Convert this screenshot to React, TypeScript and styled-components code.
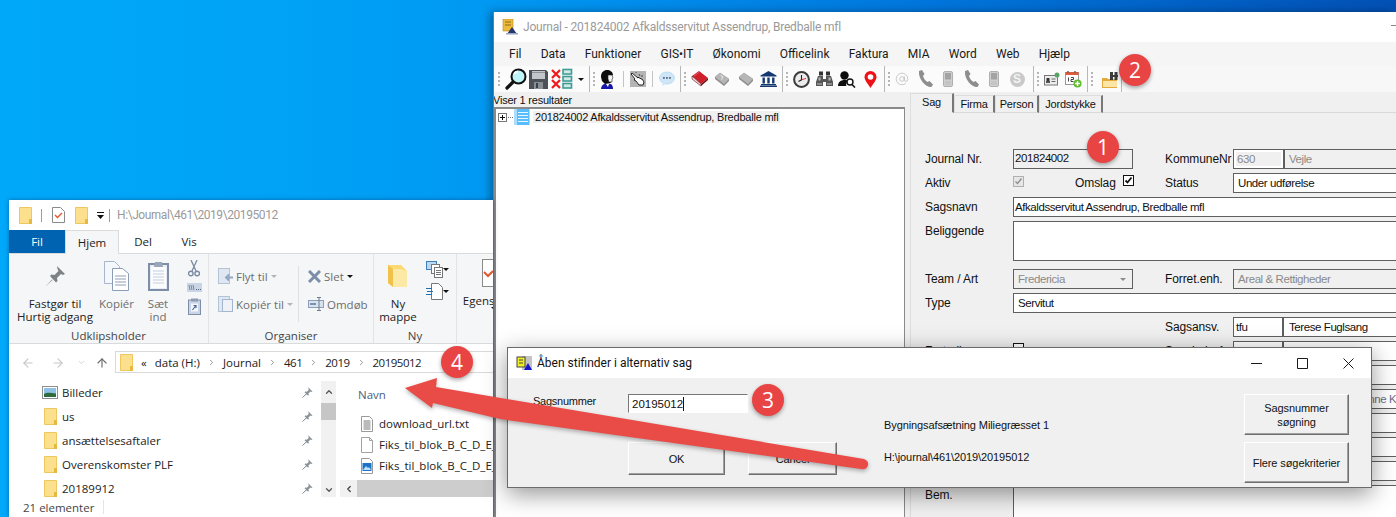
import React from 'react'
import styled, { createGlobalStyle } from 'styled-components'
import { ArrowLeft, ArrowRight, ArrowUp, ChevronDown, ChevronLeft, ChevronRight, ChevronUp, AtSign } from 'lucide-react'

const GlobalStyle = createGlobalStyle`
   html, body { margin: 0; padding: 0; background: #00a2f6; }
   * { box-sizing: border-box; }
`

const segoe = `"Open Sans", "Noto Sans", sans-serif`
const caption = `Roboto, "Open Sans", sans-serif`
const winforms = `"Liberation Sans", Arial, sans-serif`

const Desktop = styled.div`
   position: relative;
   width: 1396px;
   height: 517px;
   overflow: hidden;
   background: linear-gradient(90deg, #00a8fa 0, #00a2f6 300px, #0098f2 490px, #0078de 900px, #0350b4 1396px);
`

/* ---------- icons ---------- */
const Svg = styled.svg`
   display: block;
   flex: none;
`

const Magnifier = () => (
   <Svg width="22" height="22" viewBox="0 0 22 22">
      <circle cx="13.5" cy="8.5" r="7" fill="#bff4f8" stroke="#111" strokeWidth="2" />
      <path d="M9 6a5 5 0 0 1 4-2.5" stroke="#fff" strokeWidth="2" fill="none" />
      <path d="M2 20l6-6" stroke="#111" strokeWidth="3.2" strokeLinecap="round" />
   </Svg>
)
const Floppy = () => (
   <Svg width="21" height="21" viewBox="0 0 21 21">
      <path d="M1 1h17l2 2v17H1z" fill="#4c5257" />
      <rect x="4" y="2" width="13" height="8" fill="#c3c7ca" />
      <rect x="4" y="3" width="13" height="1" fill="#8f9498" />
      <rect x="6" y="13" width="9" height="7" fill="#8a8f93" />
      <rect x="8" y="14" width="2" height="5" fill="#3b4044" />
   </Svg>
)
const XList = () => (
   <Svg width="22" height="22" viewBox="0 0 22 22">
      <path d="M1 2l8 8M9 2l-8 8M1 12l8 8M9 12l-8 8" stroke="#f0181c" strokeWidth="2.2" />
      <g fill="#cfe9e6" stroke="#3f9c95" strokeWidth="1.6">
         <rect x="12" y="1.5" width="8.5" height="4.5" />
         <rect x="12" y="8.5" width="8.5" height="4.5" />
         <rect x="12" y="15.5" width="8.5" height="4.5" />
      </g>
   </Svg>
)
const Caret = styled.i<{ $size?: number; $color?: string }>`
   display: block;
   flex: none;
   width: 0;
   height: 0;
   border-left: ${p => p.$size ?? 3}px solid transparent;
   border-right: ${p => p.$size ?? 3}px solid transparent;
   border-top: ${p => p.$size ?? 3}px solid ${p => p.$color ?? '#111'};
`
const Person = () => (
   <Svg width="16" height="20" viewBox="0 0 16 20">
      <path d="M2 8c0-5 3-7 6-7s6 2 6 5l-2 1-1 5 1 2-6 1-3-3z" fill="#0d0d0d" />
      <path d="M9 6l4 0 1 3-1 1 0 3-3 0-1-3z" fill="#f3f3f3" stroke="#222" strokeWidth=".6" />
      <path d="M2 20c0-3 2-5 4-5l5 0c2 0 3 2 3 5z" fill="#1616a8" />
      <path d="M7 15l3 0-1 3z" fill="#fff" />
   </Svg>
)
const HandPointer = () => (
   <Svg width="16" height="16" viewBox="0 0 16 16">
      <rect width="16" height="16" fill="#b4b4b4" />
      <path d="M2 2l6 5 0-1 1 1 1 0 1 1 1 0 2 3-1 3-4 0-3-4-2-1 1-1-4-5z" fill="#fff" stroke="#111" strokeWidth=".9" />
      <path d="M9 3l1 2M12 4l0 2M6 1l0 1" stroke="#333" strokeWidth=".8" />
   </Svg>
)
const Chat = () => (
   <Svg width="16" height="16" viewBox="0 0 16 16">
      <ellipse cx="8" cy="7" rx="7.5" ry="6" fill="#cfe6f7" stroke="#a9d2ee" strokeWidth=".7" />
      <path d="M4 11l-1 4 4-2z" fill="#cfe6f7" />
      <g fill="#5b6d88"><rect x="4" y="6" width="1.8" height="1.8" /><rect x="7" y="6" width="1.8" height="1.8" /><rect x="10" y="6" width="1.8" height="1.8" /></g>
   </Svg>
)
const Book = () => (
   <Svg width="18" height="16" viewBox="0 0 18 16">
      <path d="M1 5l7-5 9 7-7 6z" fill="#cf1f2b" />
      <path d="M1 5l0 3 9 7 0-2z" fill="#f2d8d8" stroke="#561015" strokeWidth=".6" />
      <path d="M10 13l0 2 7-6 0-2z" fill="#6f1016" />
      <path d="M3 5l5-3.5" stroke="#e96a70" strokeWidth=".8" />
   </Svg>
)
const TagGrey = ({ first }: { first?: boolean }) => (
   <Svg width="16" height="14" viewBox="0 0 16 14">
      <path d="M1 5l5-4 9 6-5 5z" fill="#b6b6b6" stroke="#9c9c9c" strokeWidth=".6" />
      <path d="M1 5l0 2 9 7 0-2z M10 12l0 2 5-5 0-2z" fill="#8f8f8f" />
      {first && <path d="M6.5 3.5l2.5 1-1.5 3.2" stroke="#e8e8e8" strokeWidth="1" fill="none" />}
   </Svg>
)
const Bank = () => (
   <Svg width="17" height="16" viewBox="0 0 17 16" fill="#14386f">
      <path d="M8.5 0L16.5 4.5V5.5H.5V4.5z" />
      <rect x="2.5" y="6.5" width="2.4" height="6" />
      <rect x="7.3" y="6.5" width="2.4" height="6" />
      <rect x="12.1" y="6.5" width="2.4" height="6" />
      <rect x="1" y="13" width="15" height="1.4" />
      <rect y="14.6" width="17" height="1.4" />
   </Svg>
)
const Clock = () => (
   <Svg width="17" height="17" viewBox="0 0 17 17">
      <circle cx="8.5" cy="8.5" r="7.4" fill="#ececec" stroke="#3b3b3b" strokeWidth="2" />
      <path d="M8.5 4v4.8l-3 1.6" stroke="#222" strokeWidth="1.1" fill="none" />
      <path d="M8.5 8.8l4.5-1.4" stroke="#d63a3a" strokeWidth="1" />
   </Svg>
)
const Binoculars = () => (
   <Svg width="17" height="16" viewBox="0 0 17 16">
      <rect x="3" y="0.5" width="4" height="4" fill="#333" />
      <rect x="10" y="0.5" width="4" height="4" fill="#333" />
      <path d="M2 5h5v3h3V5h5l2 6v4h-7v-4H7v4H0v-4z" fill="#565656" />
      <path d="M2.5 6.5h2v3h-2zM12.5 6.5h2v3h-2z" fill="#b9b9b9" />
      <rect x="1" y="12" width="5" height="2" fill="#8c8c8c" />
      <rect x="11" y="12" width="5" height="2" fill="#8c8c8c" />
   </Svg>
)
const PersonSearch = () => (
   <Svg width="18" height="17" viewBox="0 0 18 17">
      <circle cx="6.5" cy="4.5" r="4.2" fill="#0e0e0e" />
      <path d="M0 15c0-4 3-6 6.5-6 2 0 3 .5 3 .5L8 14l.5 1z" fill="#0e0e0e" />
      <circle cx="12" cy="11" r="3" fill="#fff" stroke="#111" strokeWidth="1.4" />
      <path d="M14 13.5l3 3" stroke="#111" strokeWidth="1.6" />
   </Svg>
)
const MapPin = () => (
   <Svg width="13" height="17" viewBox="0 0 13 17">
      <path d="M6.5 17C4 12.5 .5 9.5.5 6a6 6 0 0 1 12 0c0 3.5-3.5 6.5-6 11z" fill="#ef0f17" />
      <circle cx="6.5" cy="6" r="2.8" fill="#fff" />
   </Svg>
)
const PhoneGrey = () => (
   <Svg width="17" height="18" viewBox="0 0 17 18">
      <path d="M2 1L5 0l2.5 4-1.500 2c.5 2 2 4.500 4.500 6l2-1 3.500 3.500-1.500 2.500C10 18 1 10 2 1z" fill="#8e8e8e" />
   </Svg>
)
const MobileGrey = () => (
   <Svg width="10" height="16" viewBox="0 0 10 16">
      <rect x=".5" y=".5" width="9" height="15" rx="1.5" fill="#cfcfcf" stroke="#b0b0b0" />
      <rect x="2" y="2" width="6" height="6.5" fill="#a3a3a3" />
      <path d="M2.5 11h5M2.5 13h5" stroke="#a3a3a3" strokeDasharray="1 1" />
   </Svg>
)
const SkypeBadge = styled.span`
   display: flex;
   align-items: center;
   justify-content: center;
   width: 15px;
   height: 15px;
   border-radius: 50%;
   background: #c9c9c9;
   color: #f2f2f2;
   font: bold 12px ${winforms};
`
const ContactCard = () => (
   <Svg width="16" height="14" viewBox="0 0 16 14">
      <rect x=".5" y="3.5" width="13" height="9.5" fill="#ededed" stroke="#777" />
      <rect x="2.5" y="6" width="3" height="3" fill="#333" />
      <rect x="2" y="9" width="4" height="2" fill="#555" />
      <path d="M7.5 7h4M7.5 9.5h4" stroke="#666" />
      <circle cx="13" cy="3" r="2.5" fill="#5aa469" />
   </Svg>
)
const CalendarPlus = () => (
   <Svg width="17" height="17" viewBox="0 0 17 17">
      <rect x=".5" y="1.5" width="13" height="12" fill="#fff" stroke="#999" />
      <rect x=".5" y="1" width="13" height="3" fill="#e05b3a" />
      <path d="M3 0v2M10 0v2" stroke="#666" strokeWidth="1.5" />
      <path d="M3.500 6.500v4M6 6.500h2.500v2H6v2h2.500" stroke="#333" fill="none" strokeWidth=".9" />
      <circle cx="12.5" cy="12.5" r="4" fill="#5ebc2e" />
      <path d="M12.500 10v5M10 12.500h5" stroke="#fff" strokeWidth="1.4" />
   </Svg>
)
const FolderBinoculars = () => (
   <Svg width="17" height="17" viewBox="0 0 17 17">
      <path d="M0 7h5l1 1h9v9H0z" fill="#e3a93c" />
      <path d="M1 10h14v6H1z" fill="#fbe6a6" />
      <rect x="8" y="1" width="3" height="8" fill="#3c3c3c" />
      <rect x="12.5" y="1" width="3" height="8" fill="#3c3c3c" />
      <rect x="8" y="4" width="8" height="2" fill="#3c3c3c" />
   </Svg>
)
const JournalIcon = () => (
   <Svg width="16" height="16" viewBox="0 0 16 16">
      <rect x="1" y="0" width="10" height="12" fill="#efbb3c" stroke="#b98a20" strokeWidth=".6" />
      <path d="M3 3h6M3 6h6" stroke="#8b6a18" />
      <path d="M10 8l5 7H5z" fill="#27376f" />
      <rect x="4" y="14" width="12" height="1.5" fill="#9aa3c0" />
   </Svg>
)
const DialogIcon = () => (
   <Svg width="17" height="17" viewBox="0 0 17 17">
      <rect x="6" y="1" width="10" height="14" fill="#c4c4c4" />
      <rect x="1" y="2" width="8" height="10" fill="#f2ee1f" stroke="#444" />
      <path d="M3 5h4M3 8h4" stroke="#444" />
      <path d="M12 8l4 7H8z" fill="#1414cc" />
   </Svg>
)
const TreePlus = () => (
   <Svg width="9" height="9" viewBox="0 0 9 9">
      <rect x=".5" y=".5" width="8" height="8" fill="#fff" stroke="#777" />
      <path d="M2 4.5h5M4.5 2v5" stroke="#111" />
   </Svg>
)
const TreeList = () => (
   <Svg width="16" height="16" viewBox="0 0 16 16">
      <rect x=".5" width="1" height="16" fill="#58bdfd" />
      <rect x="2.5" width="13" height="16" fill="#58bdfd" />
      <path d="M4 3.500h10M4 6.500h10M4 9.500h10M4 12.500h10" stroke="#e8f6ff" />
   </Svg>
)
const Folder = ({ w = 13, h = 17 }: { w?: number; h?: number }) => (
   <Svg width={w} height={h} viewBox="0 0 13 17">
      <path d="M.5.5h12v16H.5z" fill="#fde08e" stroke="#eec75f" />
      <rect x="10" y="12" width="3" height="5" fill="#e9b83f" />
   </Svg>
)
const QuickCheck = () => (
   <Svg width="13" height="16" viewBox="0 0 13 16">
      <path d="M.5.5h8l4 4v11H.5z" fill="#fff" stroke="#8a8a8a" />
      <path d="M3 8l2.500 2.500L10 6" stroke="#e2572b" strokeWidth="1.4" fill="none" />
   </Svg>
)
const DropLine = () => (
   <Svg width="7" height="7" viewBox="0 0 7 7">
      <rect width="7" height="1" fill="#111" />
      <path d="M0 3h7L3.500 7z" fill="#111" />
   </Svg>
)
const RibbonPin = () => (
   <Svg width="22" height="22" viewBox="0 0 22 22" fill="#7d8287">
      <path d="M13 1l8 8-2 1-2-1-4 4 .5 3-1.500 1.500L6 11l1.500-1.500 3 .5 4-4-1-2z" />
      <path d="M8 14.500l-6.500 7 7-6.500z" />
   </Svg>
)
const CopyIcon = () => (
   <Svg width="25" height="30" viewBox="0 0 25 30">
      <path d="M.5.5h10l5 5v17H.5z" fill="#f4f7fb" stroke="#a7b6cb" />
      <path d="M8.5 7.5h10l6 5v17h-16z" fill="#fff" stroke="#8c9db6" />
      <path d="M11 15h11M11 18h11M11 21h11M11 24h11" stroke="#8c9db6" />
   </Svg>
)
const PasteIcon = () => (
   <Svg width="21" height="30" viewBox="0 0 21 30">
      <rect x="1" y="3" width="19" height="26" fill="#e9edf3" stroke="#7f8ea8" strokeWidth="2" />
      <rect x="3" y="6" width="15" height="21" fill="#fbfcfe" />
      <path d="M5 10h11M5 13h11M5 16h11M5 19h11M5 22h11" stroke="#c3cfde" />
      <path d="M7 1h7l1 5H6z" fill="#9aa6b8" />
   </Svg>
)
const ScissorsIcon = () => (
   <Svg width="12" height="17" viewBox="0 0 12 17" fill="none" stroke="#7b8ba3">
      <path d="M3 0l5 11M9 0L4 11" strokeWidth="1.3" />
      <circle cx="2.8" cy="13.5" r="2.3" strokeWidth="1.4" />
      <circle cx="9.2" cy="13.5" r="2.3" strokeWidth="1.4" />
   </Svg>
)
const PathIcon = () => (
   <Svg width="15" height="9" viewBox="0 0 15 9">
      <rect width="15" height="9" fill="#c9d4e4" />
      <path d="M2 2l1 5M4 2l1 5M6 2l1 5" stroke="#5b6a82" strokeWidth=".7" />
      <path d="M9 6.500h1M11 6.500h1M13 6.500h1" stroke="#5b6a82" />
   </Svg>
)
const ShortcutIcon = () => (
   <Svg width="13" height="17" viewBox="0 0 13 17">
      <rect x=".5" y="2" width="12" height="14.5" fill="#c9d5e6" stroke="#7f8ea8" />
      <rect x="3" y=".5" width="7" height="3" fill="#8f9db3" />
      <rect x="3" y="5.5" width="7" height="8" fill="#f4f6fa" />
      <path d="M4.500 12l3-4M5.500 7.500h2.500V10" stroke="#4a6a96" fill="none" strokeWidth="1.2" />
   </Svg>
)
const MoveIcon = ({ copy }: { copy?: boolean }) => (
   <Svg width="15" height="16" viewBox="0 0 15 16">
      <rect x=".5" y=".5" width="11" height="15" fill="#dfe7f2" stroke="#b4c3d8" />
      {copy
         ? <rect x="4.5" y="3.5" width="10" height="12" fill="#eef2f8" stroke="#a4b5cd" />
         : <path d="M15 9.500H9M11 6.500l-3 3 3 3" stroke="#93a6c2" strokeWidth="1.8" fill="none" />}
   </Svg>
)
const RenameIcon = () => (
   <Svg width="16" height="14" viewBox="0 0 16 14">
      <rect x=".5" y="3.5" width="15" height="7" fill="#d8e2ef" stroke="#8ba0bd" />
      <rect x="2" y="6" width="6" height="2" fill="#7c91ad" />
      <path d="M11 .5v13M9 .5h4M9 13.500h4" stroke="#6f7a8b" />
   </Svg>
)
const DeleteX = () => (
   <Svg width="13" height="13" viewBox="0 0 13 13">
      <path d="M1 1l11 11M12 1L1 12" stroke="#7c8ea8" strokeWidth="3" />
   </Svg>
)
const NewFolderLarge = () => (
   <Svg width="20" height="24" viewBox="0 0 20 24">
      <path d="M0 1h13l6 6v16H5l-5-4z" fill="#fcd973" />
      <path d="M0 1l5 4 0 18-5-4z" fill="#f2c14c" />
      <path d="M5 5h8l6 2v16H5z" fill="#fde9a6" />
   </Svg>
)
const NewItem = () => (
   <Svg width="17" height="17" viewBox="0 0 17 17">
      <rect x=".5" y=".5" width="10" height="8" fill="#bcd7ef" stroke="#3f7fb8" />
      <rect x="5.5" y="3.5" width="8" height="9" fill="#fff" stroke="#777" />
      <rect x="8.5" y="6.5" width="8" height="10" fill="#fff" stroke="#777" />
      <path d="M10 9.500h5M10 11.500h5M10 13.500h5" stroke="#777" />
   </Svg>
)
const EasyAccess = () => (
   <Svg width="17" height="17" viewBox="0 0 17 17">
      <path d="M5.500.5h7l4 4v12h-11z" fill="#fff" stroke="#777" />
      <path d="M0 5.500h6M1 8.500h6M0 11.500h6" stroke="#1f6fb5" strokeWidth="1.2" />
   </Svg>
)
const Properties = () => (
   <Svg width="13" height="28" viewBox="0 0 13 28">
      <rect x=".5" y=".5" width="12" height="27" fill="#fff" stroke="#8a8a8a" />
      <path d="M2 13l4 4 5-5" stroke="#e2572b" strokeWidth="2" fill="none" />
   </Svg>
)
const NavPin = () => (
   <Svg width="11" height="11" viewBox="0 0 11 11" fill="#8d9499">
      <path d="M6.500.5l4 4-1 .5-1-.5-2 2 .3 1.500-.8.8-3.500-3.500.8-.8 1.500.3 2-2-.5-1z" />
      <path d="M4 7L.5 10.500 1 10l3.500-3z" stroke="#8d9499" strokeWidth=".8" />
   </Svg>
)
const PictureIcon = () => (
   <Svg width="16" height="13" viewBox="0 0 16 13">
      <rect x=".5" y=".5" width="15" height="12" fill="#fff" stroke="#8f8f8f" />
      <rect x="2" y="2" width="12" height="9" fill="#8fc0e6" />
      <path d="M2 8c3-2 7-1 12-.5V11H2z" fill="#2e6b3e" />
   </Svg>
)
const TextFile = () => (
   <Svg width="12" height="16" viewBox="0 0 12 16">
      <path d="M.5.5h8l3 3v12H.5z" fill="#fff" stroke="#9a9a9a" />
      <path d="M2.500 5h7M2.500 7h7M2.500 9h7M2.500 11h7M2.500 13h7" stroke="#777" />
   </Svg>
)
const BlankFile = () => (
   <Svg width="12" height="16" viewBox="0 0 12 16">
      <path d="M.5.5h8l3 3v12H.5z" fill="#fff" stroke="#a2a2a2" />
      <path d="M8.500.5v3h3" fill="none" stroke="#a2a2a2" />
   </Svg>
)
const ImageFile = () => (
   <Svg width="12" height="16" viewBox="0 0 12 16">
      <path d="M.5.5h8l3 3v12H.5z" fill="#fff" stroke="#9a9a9a" />
      <rect x="1.5" y="5" width="9" height="8" fill="#1a73c9" />
      <path d="M2 12l3-4 2 2 1-1 2 3z" fill="#bfe0fa" />
   </Svg>
)
const WinGlyph = ({ d, color = '#1a1a1a' }: { d: string; color?: string }) => (
   <Svg width="11" height="11" viewBox="0 0 11 11">
      <path d={d} fill="none" stroke={color} />
   </Svg>
)

/* ---------- journal window ---------- */
const JournalWindow = styled.div`
   position: absolute;
   left: 493px;
   top: 12px;
   right: 0;
   bottom: 0;
   display: flex;
   flex-direction: column;
   overflow: hidden;
   background: #f0f0f0;
   border-left: 1px solid #7a7a7a;
   box-shadow: -3px 0 8px rgba(0, 0, 0, .35);
`
const TitleBar = styled.div`
   display: flex;
   flex: none;
   align-items: center;
   gap: 5px;
   height: 30px;
   padding-left: 8px;
   background: #fff;
   color: #9a9a9a;
   font: 12px ${caption};
   letter-spacing: -.2px;
`
const TitleText = styled.span`
   flex: 1;
`
const ClippedMinimize = styled.span`
   margin-right: -6px;
`
const MenuBar = styled.div`
   display: flex;
   flex: none;
   align-items: center;
   gap: 19.2px;
   height: 24px;
   padding-left: 15px;
   background: #f5f5f5;
   color: #1a1a1a;
   font: 12px ${caption};
`
const ToolBar = styled.div`
   display: flex;
   flex: none;
   height: 26px;
   padding-left: 1px;
   background: #f7f7f7;
`
const ToolGroup = styled.div<{ $w: number }>`
   display: flex;
   flex: none;
   align-items: center;
   width: ${p => p.$w}px;
   height: 26px;
   background: #fbfbfb;
   border-right: 1px solid #b8b8b8;
   border-radius: 3px 0 0 3px;
`
const Grip = styled.i`
   flex: none;
   width: 2px;
   height: 14px;
   margin: 0 5px 0 3px;
   background: repeating-linear-gradient(#b5b5b5 0 2px, transparent 2px 4px);
`
const Tool = styled.span<{ $w?: number }>`
   display: flex;
   flex: none;
   align-items: center;
   justify-content: center;
   width: ${p => p.$w ?? 23}px;
`
const ToolSep = styled.i`
   flex: none;
   width: 1px;
   height: 16px;
   background: #c4c4c4;
`
const Main = styled.div`
   display: flex;
   flex: 1;
   min-height: 0;
`
const TreeSide = styled.div`
   display: flex;
   flex: none;
   flex-direction: column;
   width: 411px;
   color: #111;
   font: 11px ${winforms};
   letter-spacing: -.22px;
`
const ResultCount = styled.div`
   height: 15px;
   margin-left: -1px;
   line-height: 17px;
`
const TreeBox = styled.div`
   flex: 1;
   padding: 0 2px;
   background: #fff;
   border: 1px solid #8a8a8a;
   border-width: 2px 1px 0 2px;
`
const TreeRow = styled.div`
   display: flex;
   align-items: center;
   height: 16px;
`
const TreeDots = styled.i`
   width: 5px;
   margin: 0 1px;
   border-top: 1px dotted #777;
`
const TreeLabel = styled.span`
   margin-left: 3px;
   padding: 0 2px;
   background: #f0f0f0;
   white-space: nowrap;
`
const DetailSide = styled.div`
   display: flex;
   flex: 1;
   flex-direction: column;
   min-width: 0;
   padding: 1px 0 0 5px;
`
const TabStrip = styled.div`
   display: flex;
   flex: none;
   align-items: flex-end;
   height: 20px;
   border-bottom: 1px solid #d9d9d9;
   font: 11px ${winforms};
   letter-spacing: -.2px;
   color: #111;
`
const WinTab = styled.div<{ $w: number; $active?: boolean }>`
   display: flex;
   align-items: center;
   justify-content: center;
   width: ${p => p.$w}px;
   height: ${p => (p.$active ? 20 : 18)}px;
   margin-bottom: -1px;
   padding: 0 0 ${p => (p.$active ? 3 : 0)}px;
   background: #f0f0f0;
   border-top: 1px solid #ddd;
   border-left: 1px solid #ddd;
   border-right: 2px solid #777;
   border-bottom: 1px solid ${p => (p.$active ? '#f0f0f0' : '#d9d9d9')};
`
const FormPanel = styled.div`
   display: flex;
   flex: 1;
   flex-direction: column;
   gap: 4px;
   margin-right: -8px;
   padding: 36px 0 0 14px;
   border-left: 1px solid #ddd;
   font: 12px ${winforms};
   color: #111;
`
const FormRow = styled.div<{ $h?: number; $top?: number }>`
   display: flex;
   flex: none;
   height: ${p => p.$h ?? 20}px;
   margin-top: ${p => p.$top ?? 0}px;
`
const FormLabel = styled.span<{ $w: number }>`
   flex: none;
   width: ${p => p.$w}px;
   padding-top: 3px;
   white-space: nowrap;
   letter-spacing: -.1px;
`
const Field = styled.div<{ $w?: number; $muted?: boolean; $framed?: boolean; $pad?: number }>`
   display: flex;
   flex: ${p => (p.$w ? 'none' : '1')};
   align-items: center;
   justify-content: space-between;
   width: ${p => (p.$w ? `${p.$w}px` : 'auto')};
   padding: 0 6px 0 ${p => p.$pad ?? 3}px;
   background: ${p => (p.$muted ? '#f0f0f0' : '#fff')};
   border: 1px solid #5f5f5f;
   box-shadow: ${p => (p.$framed ? 'inset 0 0 0 2px #fff' : 'none')};
   color: ${p => (p.$muted ? '#8a8a8a' : '#111')};
   font-size: 11.5px;
   letter-spacing: -.42px;
   white-space: nowrap;
   overflow: hidden;
`
const FieldValue = styled.span`
   margin-top: -3px;
   color: #111;
`
const GreyValue = styled.span`
   color: #6f6f8a;
`
const Check = styled.span<{ $muted?: boolean }>`
   display: flex;
   flex: none;
   align-items: center;
   justify-content: center;
   width: 11px;
   height: 11px;
   margin-top: ${p => (p.$muted ? 3 : 2)}px;
   background: ${p => (p.$muted ? '#e6e6e6' : '#fff')};
   border: 1px solid ${p => (p.$muted ? '#b0b0b0' : '#111')};
`
const Spacer = styled.i<{ $w: number }>`
   flex: none;
   width: ${p => p.$w}px;
`

/* ---------- explorer window ---------- */
const ExplorerWindow = styled.div`
   position: absolute;
   left: 9px;
   top: 200px;
   width: 484px;
   bottom: 0;
   display: flex;
   flex-direction: column;
   overflow: hidden;
   background: #fff;
   font: 11.5px ${segoe};
   color: #222;
   box-shadow: 0 0 4px rgba(0, 40, 90, .5);
`
const QuickBar = styled.div`
   display: flex;
   flex: none;
   align-items: center;
   height: 30px;
   padding-left: 10px;
   color: #9a9a9a;
   font: 12px ${caption};
   letter-spacing: -.42px;
`
const QuickSep = styled.i<{ $l: number; $r: number }>`
   flex: none;
   width: 1px;
   height: 13px;
   margin: 0 ${p => p.$r}px 0 ${p => p.$l}px;
   background: #9a9a9a;
`
const RibbonTabs = styled.div`
   display: flex;
   flex: none;
   align-items: stretch;
   height: 24px;
   border-bottom: 1px solid #dadbdc;
`
const RibbonTab = styled.div<{ $w: number; $kind?: 'file' | 'active' }>`
   display: flex;
   align-items: center;
   justify-content: center;
   width: ${p => p.$w}px;
   margin-bottom: ${p => (p.$kind === 'active' ? -1 : 0)}px;
   background: ${p => (p.$kind === 'file' ? '#0063b1' : p.$kind === 'active' ? '#f5f6f7' : 'transparent')};
   color: ${p => (p.$kind === 'file' ? '#fff' : '#222')};
   border: ${p => (p.$kind === 'active' ? '1px solid #dadbdc' : 'none')};
   border-bottom: none;
`
const Ribbon = styled.div`
   display: flex;
   flex: none;
   height: 90px;
   background: #f5f6f7;
   border-bottom: 1px solid #dadbdc;
`
const RibbonGroup = styled.div<{ $w: number }>`
   display: flex;
   flex: none;
   flex-direction: column;
   width: ${p => p.$w}px;
   padding-top: 3px;
   border-right: 1px solid #e2e3e4;
`
const GroupBody = styled.div`
   display: flex;
   flex: 1;
   min-height: 0;
`
const GroupLabel = styled.div`
   flex: none;
   height: 17px;
   line-height: 19px;
   text-align: center;
   color: #444;
`
const BigButton = styled.div<{ $w: number; $muted?: boolean }>`
   display: flex;
   flex: none;
   flex-direction: column;
   align-items: center;
   width: ${p => p.$w}px;
   color: ${p => (p.$muted ? '#6e6e6e' : '#222')};
   line-height: 13px;
   text-align: center;
   white-space: nowrap;
`
const BigIcon = styled.div<{ $shift?: number }>`
   display: flex;
   align-items: center;
   justify-content: center;
   height: 38px;
   margin: 0 ${p => p.$shift ?? 0}px 2px 0;
`
const SmallColumn = styled.div<{ $gap: number; $pad: number; $w: number }>`
   display: flex;
   flex: none;
   flex-direction: column;
   align-items: center;
   gap: ${p => p.$gap}px;
   width: ${p => p.$w}px;
   padding-top: ${p => p.$pad}px;
`
const InlineColumn = styled.div<{ $w: number }>`
   display: flex;
   flex: none;
   flex-direction: column;
   gap: 12px;
   width: ${p => p.$w}px;
   padding: 11px 0 0 9px;
`
const InlineAction = styled.div`
   display: flex;
   align-items: center;
   gap: 3px;
   height: 16px;
   color: #6e6e6e;
   white-space: nowrap;
`
const GroupSep = styled.i`
   flex: none;
   width: 1px;
   height: 56px;
   margin-top: 9px;
   background: #dfe0e1;
`
const AddressRow = styled.div`
   display: flex;
   flex: none;
   align-items: center;
   height: 37px;
   padding-left: 12px;
`
const NavButton = styled.span<{ $w: number; $color?: string }>`
   display: flex;
   flex: none;
   justify-content: center;
   width: ${p => p.$w}px;
   color: ${p => p.$color ?? '#c8c8c8'};
`
const AddressBox = styled.div`
   display: flex;
   flex: 1;
   align-items: center;
   gap: 7px;
   height: 22px;
   margin-left: 6px;
   margin-top: -1px;
   padding-left: 4px;
   background: #fff;
   border: 1px solid #d9d9d9;
   border-right: none;
   color: #222;
   white-space: nowrap;
`
const Crumb = styled.span<{ $ml?: number; $tight?: boolean }>`
   margin-left: ${p => p.$ml ?? 0}px;
   letter-spacing: ${p => (p.$tight ? '-.5px' : 'normal')};
`
const ExplorerBody = styled.div`
   display: flex;
   flex: 1;
   min-height: 0;
`
const NavPane = styled.div`
   flex: none;
   display: flex;
   flex-direction: column;
   width: 312px;
   overflow: hidden;
`
const NavItem = styled.div`
   display: flex;
   flex: none;
   align-items: center;
   height: 24px;
   padding: 0 0 1px 33px;
`
const NavIconSlot = styled.span`
   display: flex;
   flex: none;
   justify-content: center;
   width: 16px;
   margin-right: 4px;
`
const NavText = styled.span`
   flex: 1;
   white-space: nowrap;
`
const NavPinSlot = styled.span`
   flex: none;
   width: 19px;
`
const NavScroll = styled.div`
   flex: none;
   display: flex;
   flex-direction: column;
   align-items: center;
   width: 15px;
   background: #f1f1f1;
   color: #555;
`
const ScrollEnd = styled.span<{ $grow?: boolean }>`
   flex: ${p => (p.$grow ? '1' : 'none')};
   display: flex;
   justify-content: center;
   align-items: ${p => (p.$grow ? 'flex-end' : 'flex-start')};
   padding: ${p => (p.$grow ? '0 0 2px' : '6px 0 0')};
`
const NavThumb = styled.i`
   flex: none;
   width: 15px;
   height: 17px;
   margin-top: 6px;
   background: #c6c6c6;
`
const FilePane = styled.div`
   flex: 1;
   display: flex;
   flex-direction: column;
   min-width: 0;
   margin-left: 4px;
   overflow: hidden;
`
const FileList = styled.div`
   flex: 1;
   min-height: 0;
   overflow: hidden;
`
const FileHead = styled.div`
   height: 32px;
   padding: 6px 0 0 18px;
   color: #4c607a;
`
const FileRow = styled.div`
   display: flex;
   align-items: center;
   gap: 6px;
   height: 21px;
   padding-left: 21px;
   white-space: nowrap;
   overflow: hidden;
`
const GroupLink = styled.div`
   height: 14px;
   padding-left: 18px;
   color: #0033cc;
`
const HScroll = styled.div`
   display: flex;
   flex: none;
   height: 17px;
   background: #f1f1f1;
   color: #444;
`
const HScrollEnd = styled.span`
   flex: none;
   display: flex;
   align-items: center;
   justify-content: center;
   width: 17px;
`
const HThumb = styled.i`
   flex: 1;
   background: #cdcdcd;
`
const StatusBar = styled.div`
   display: flex;
   flex: none;
   align-items: center;
   height: 20px;
   padding-left: 14px;
   color: #444;
`
const StatusSep = styled.i`
   width: 1px;
   height: 14px;
   margin-left: 9px;
   background: #e4e4e4;
`

/* ---------- dialog ---------- */
const Dialog = styled.div`
   position: absolute;
   left: 507px;
   top: 347px;
   width: 865px;
   height: 141px;
   display: flex;
   flex-direction: column;
   background: #f0f0f0;
   border: 1px solid #6b6b6b;
   box-shadow: 0 6px 22px rgba(0, 0, 0, .42);
   font: 11px ${winforms};
   letter-spacing: -.1px;
   color: #111;
`
const DialogTitle = styled.div`
   display: flex;
   flex: none;
   align-items: center;
   height: 30px;
   padding-left: 8px;
   background: #fff;
   font: 12px ${caption};
   letter-spacing: 0;
   color: #111;
`
const DialogName = styled.span`
   flex: 1;
   margin-left: 4px;
`
const WinControls = styled.div`
   display: flex;
   align-items: center;
   gap: 35px;
   padding-right: 17px;
`
const DialogBody = styled.div`
   display: flex;
   flex: 1;
   padding: 16px 22px 0 25px;
`
const SearchGrid = styled.div`
   display: grid;
   flex: none;
   grid-template-columns: 95px 97px 23px 89px;
   grid-template-rows: 19px 33px;
   row-gap: 29px;
`
const SearchLabel = styled.span`
   padding-top: 1px;
   letter-spacing: -.25px;
`
const SearchInput = styled.div`
   grid-column: 2 / 4;
   display: flex;
   align-items: center;
   padding-left: 3px;
   background: #fff;
   border: 1px solid;
   border-color: #777 #fff #fff #777;
   font-size: 11.5px;
   letter-spacing: 0;
`
const Caretline = styled.i`
   width: 1px;
   height: 14px;
   background: #111;
`
const WinButton = styled.div<{ $col?: number }>`
   grid-column: ${p => p.$col ?? 'auto'};
   display: flex;
   align-items: center;
   justify-content: center;
   padding: 0 2px;
   background: #f0f0f0;
   border: 1px solid;
   border-color: #fff #6f6f6f #6f6f6f #fff;
   box-shadow: inset -1px -1px 0 #a0a0a0;
   line-height: 14px;
   text-align: center;
   white-space: nowrap;
`
const InfoColumn = styled.div`
   display: flex;
   flex: 1;
   flex-direction: column;
   gap: 20px;
   margin-left: 47px;
   padding-top: 25px;
`
const SideButtons = styled.div`
   display: grid;
   flex: none;
   grid-template-rows: 41px 41px;
   row-gap: 7px;
   width: 105px;
`

/* ---------- annotations ---------- */
const Badge = styled.div<{ $x: number; $y: number }>`
   position: absolute;
   left: ${p => p.$x - 16}px;
   top: ${p => p.$y - 16}px;
   display: flex;
   align-items: center;
   justify-content: center;
   width: 32px;
   height: 32px;
   border-radius: 50%;
   background: #e94444;
   box-shadow: 0 2px 4px rgba(0, 0, 0, .35);
   color: #fff;
   font: 21px ${segoe};
`
const ArrowOverlay = styled.svg`
   position: absolute;
   left: 0;
   top: 0;
   filter: drop-shadow(0 2px 2px rgba(0, 0, 0, .3));
`

const menuItems = ['Fil', 'Data', 'Funktioner', 'GIS•IT', 'Økonomi', 'Officelink', 'Faktura', 'MIA', 'Word', 'Web', 'Hjælp']
const navItems = ['us', 'ansættelsesaftaler', 'Overenskomster PLF', '20189912']

const App: React.FC = () => (
   <Desktop>
      <GlobalStyle />

      <JournalWindow>
         <TitleBar>
            <JournalIcon />
            <TitleText>Journal - 201824002 Afkaldsservitut Assendrup, Bredballe mfl</TitleText>
            <ClippedMinimize><WinGlyph d="M0 3.5h11" color="#888" /></ClippedMinimize>
         </TitleBar>
         <MenuBar>{menuItems.map(item => <span key={item}>{item}</span>)}</MenuBar>
         <ToolBar>
            <ToolGroup $w={95}>
               <Grip />
               <Tool $w={21}><Magnifier /></Tool><Tool $w={24}><Floppy /></Tool><Tool $w={24}><XList /></Tool>
               <Tool $w={14}><Caret /></Tool>
            </ToolGroup>
            <ToolGroup $w={91}>
               <Grip />
               <Tool $w={14}><Person /></Tool>
               <Tool $w={18}><ToolSep /></Tool>
               <Tool $w={11}><HandPointer /></Tool>
               <Tool $w={18}><ToolSep /></Tool>
               <Tool $w={12}><Chat /></Tool>
            </ToolGroup>
            <ToolGroup $w={102}>
               <Grip />
               <Tool $w={18}><Book /></Tool><Tool $w={26}><TagGrey first /></Tool><Tool $w={22}><TagGrey /></Tool><Tool $w={22}><Bank /></Tool>
            </ToolGroup>
            <ToolGroup $w={102}>
               <Grip />
               <Tool $w={16}><Clock /></Tool><Tool $w={30}><Binoculars /></Tool><Tool $w={16}><PersonSearch /></Tool><Tool $w={30}><MapPin /></Tool>
            </ToolGroup>
            <ToolGroup $w={149}>
               <Grip />
               <Tool $w={14}><AtSign size={16} color="#c4c4c4" strokeWidth={1.5} /></Tool>
               <Tool $w={32}><PhoneGrey /></Tool><Tool $w={14}><MobileGrey /></Tool><Tool $w={32}><PhoneGrey /></Tool><Tool $w={14}><MobileGrey /></Tool>
               <Tool $w={32}><SkypeBadge>S</SkypeBadge></Tool>
            </ToolGroup>
            <ToolGroup $w={54}>
               <Grip />
               <Tool $w={16}><ContactCard /></Tool><Tool $w={26}><CalendarPlus /></Tool>
            </ToolGroup>
            <ToolGroup $w={34}>
               <Grip />
               <Tool $w={24}><FolderBinoculars /></Tool>
            </ToolGroup>
         </ToolBar>
         <Main>
            <TreeSide>
               <ResultCount>Viser 1 resultater</ResultCount>
               <TreeBox>
                  <TreeRow>
                     <TreePlus /><TreeDots /><TreeList />
                     <TreeLabel>201824002 Afkaldsservitut Assendrup, Bredballe mfl</TreeLabel>
                  </TreeRow>
               </TreeBox>
            </TreeSide>
            <DetailSide>
               <TabStrip>
                  <WinTab $w={44} $active>Sag</WinTab>
                  <WinTab $w={41}>Firma</WinTab>
                  <WinTab $w={44}>Person</WinTab>
                  <WinTab $w={64}>Jordstykke</WinTab>
               </TabStrip>
               <FormPanel>
                  <FormRow>
                     <FormLabel $w={88}>Journal Nr.</FormLabel>
                     <Field $w={120} $muted $pad={1}><FieldValue>201824002</FieldValue></Field>
                     <Spacer $w={32} />
                     <FormLabel $w={68}>KommuneNr</FormLabel>
                     <Field $w={51} $muted $framed $pad={3}>630</Field>
                     <Field $muted $pad={4}>Vejle</Field>
                  </FormRow>
                  <FormRow>
                     <FormLabel $w={88}>Aktiv</FormLabel>
                     <Check $muted><Svg width="9" height="9" viewBox="0 0 9 9"><path d="M1.500 4.500l2 2 4-5" stroke="#8f8f8f" strokeWidth="1.3" fill="none" /></Svg></Check>
                     <Spacer $w={51} />
                     <FormLabel $w={48}>Omslag</FormLabel>
                     <Check><Svg width="9" height="9" viewBox="0 0 9 9"><path d="M1.500 4.500l2 2 4-5" stroke="#111" strokeWidth="1.8" fill="none" /></Svg></Check>
                     <Spacer $w={31} />
                     <FormLabel $w={68}>Status</FormLabel>
                     <Field $pad={4}>Under udførelse</Field>
                  </FormRow>
                  <FormRow>
                     <FormLabel $w={88}>Sagsnavn</FormLabel>
                     <Field $pad={1}>Afkaldsservitut Assendrup, Bredballe mfl</Field>
                  </FormRow>
                  <FormRow $h={40}>
                     <FormLabel $w={88}>Beliggende</FormLabel>
                     <Field />
                  </FormRow>
                  <FormRow $top={4}>
                     <FormLabel $w={88}>Team / Art</FormLabel>
                     <Field $w={120} $muted $pad={4}>Fredericia<Caret $color="#8a8a8a" /></Field>
                     <Spacer $w={32} />
                     <FormLabel $w={68}>Forret.enh.</FormLabel>
                     <Field $muted $pad={4}>Areal &amp; Rettigheder</Field>
                  </FormRow>
                  <FormRow>
                     <FormLabel $w={88}>Type</FormLabel>
                     <Field $pad={4}>Servitut</Field>
                  </FormRow>
                  <FormRow>
                     <Spacer $w={240} />
                     <FormLabel $w={68}>Sagsansv.</FormLabel>
                     <Field $w={50} $pad={2}>tfu</Field>
                     <Field $pad={5}>Terese Fuglsang</Field>
                  </FormRow>
                  <FormRow>
                     <FormLabel $w={88}>Fortrolig</FormLabel>
                     <Check />
                     <Spacer $w={141} />
                     <FormLabel $w={68}>Sagsbeh. 1</FormLabel>
                     <Field $w={50} />
                     <Field />
                  </FormRow>
                  <FormRow>
                     <Spacer $w={240} />
                     <Field />
                  </FormRow>
                  <FormRow>
                     <Spacer $w={240} />
                     <Field $pad={195}><GreyValue>Anne Kristensen</GreyValue></Field>
                  </FormRow>
                  <FormRow>
                     <Spacer $w={88} />
                     <Field />
                  </FormRow>
                  <FormRow>
                     <Spacer $w={88} />
                     <Field />
                  </FormRow>
                  <FormRow>
                     <Spacer $w={88} />
                     <Field />
                  </FormRow>
                  <FormRow $h={60}>
                     <FormLabel $w={88}>Bem.</FormLabel>
                     <Field />
                  </FormRow>
               </FormPanel>
            </DetailSide>
         </Main>
      </JournalWindow>

      <ExplorerWindow>
         <QuickBar>
            <Folder />
            <QuickSep $l={9} $r={10} />
            <QuickCheck />
            <Spacer $w={10} />
            <Folder />
            <Spacer $w={9} />
            <DropLine />
            <QuickSep $l={5} $r={7} />
            H:\Journal\461\2019\20195012
         </QuickBar>
         <RibbonTabs>
            <RibbonTab $w={56} $kind="file">Fil</RibbonTab>
            <RibbonTab $w={54} $kind="active">Hjem</RibbonTab>
            <RibbonTab $w={48}>Del</RibbonTab>
            <RibbonTab $w={44}>Vis</RibbonTab>
         </RibbonTabs>
         <Ribbon>
            <RibbonGroup $w={200}>
               <GroupBody>
                  <BigButton $w={92}><BigIcon><RibbonPin /></BigIcon>Fastgør til<br />Hurtig adgang</BigButton>
                  <BigButton $w={31} $muted><BigIcon><CopyIcon /></BigIcon>Kopiér</BigButton>
                  <Spacer $w={8} />
                  <BigButton $w={36} $muted><BigIcon><PasteIcon /></BigIcon>Sæt<br />ind</BigButton>
                  <Spacer $w={3} />
                  <SmallColumn $w={30} $gap={6} $pad={3}><ScissorsIcon /><PathIcon /><ShortcutIcon /></SmallColumn>
               </GroupBody>
               <GroupLabel>Udklipsholder</GroupLabel>
            </RibbonGroup>
            <RibbonGroup $w={165}>
               <GroupBody>
                  <InlineColumn $w={89}>
                     <InlineAction><MoveIcon />Flyt til<Caret $color="#b5b5b5" /></InlineAction>
                     <InlineAction><MoveIcon copy />Kopiér til<Caret $color="#b5b5b5" /></InlineAction>
                  </InlineColumn>
                  <GroupSep />
                  <InlineColumn $w={75}>
                     <InlineAction><DeleteX />Slet<Caret /></InlineAction>
                     <InlineAction><RenameIcon />Omdøb</InlineAction>
                  </InlineColumn>
               </GroupBody>
               <GroupLabel>Organiser</GroupLabel>
            </RibbonGroup>
            <RibbonGroup $w={83}>
               <GroupBody>
                  <BigButton $w={48}><BigIcon><NewFolderLarge /></BigIcon>Ny<br />mappe</BigButton>
                  <SmallColumn $w={30} $gap={5} $pad={4}>
                     <Tool $w={28}><NewItem /><Caret /></Tool>
                     <Tool $w={28}><EasyAccess /><Caret /></Tool>
                  </SmallColumn>
               </GroupBody>
               <GroupLabel>Ny</GroupLabel>
            </RibbonGroup>
            <BigButton $w={74}>
               <BigIcon $shift={12}><Properties /></BigIcon>
               Egenskaber
               <Caret />
            </BigButton>
         </Ribbon>
         <AddressRow>
            <NavButton $w={14}><ArrowLeft size={14} /></NavButton>
            <Spacer $w={16} />
            <NavButton $w={14}><ArrowRight size={14} /></NavButton>
            <Spacer $w={7} />
            <NavButton $w={18}><ChevronDown size={9} /></NavButton>
            <Spacer $w={5} />
            <NavButton $w={14} $color="#6d6d6d"><ArrowUp size={14} /></NavButton>
            <AddressBox>
               <Folder />
               <Crumb $ml={1}>«</Crumb>
               <Crumb $ml={1}>data (H:)</Crumb>
               <ChevronRight size={9} color="#777" />
               <Crumb>Journal</Crumb>
               <ChevronRight size={9} color="#777" />
               <Crumb $tight>461</Crumb>
               <ChevronRight size={9} color="#777" />
               <Crumb $tight>2019</Crumb>
               <ChevronRight size={9} color="#777" />
               <Crumb $tight>20195012</Crumb>
            </AddressBox>
         </AddressRow>
         <ExplorerBody>
            <NavPane>
               <NavItem>
                  <NavIconSlot><PictureIcon /></NavIconSlot>
                  <NavText>Billeder</NavText>
                  <NavPinSlot><NavPin /></NavPinSlot>
               </NavItem>
               {navItems.map(item => (
                  <NavItem key={item}>
                     <NavIconSlot><Folder /></NavIconSlot>
                     <NavText>{item}</NavText>
                     <NavPinSlot><NavPin /></NavPinSlot>
                  </NavItem>
               ))}
            </NavPane>
            <NavScroll>
               <ScrollEnd><ChevronUp size={10} strokeWidth={3} /></ScrollEnd>
               <NavThumb />
               <ScrollEnd $grow><ChevronDown size={10} strokeWidth={3} /></ScrollEnd>
            </NavScroll>
            <FilePane>
               <FileList>
                  <FileHead>Navn</FileHead>
                  <FileRow><TextFile />download_url.txt</FileRow>
                  <FileRow><BlankFile />Fiks_til_blok_B_C_D_E_F.pdf</FileRow>
                  <FileRow><ImageFile />Fiks_til_blok_B_C_D_E_F.jpg</FileRow>
                  <GroupLink>Fejl</GroupLink>
               </FileList>
               <HScroll>
                  <HScrollEnd><ChevronLeft size={10} strokeWidth={3} /></HScrollEnd>
                  <HThumb />
               </HScroll>
            </FilePane>
         </ExplorerBody>
         <StatusBar>21 elementer<StatusSep /></StatusBar>
      </ExplorerWindow>

      <Dialog>
         <DialogTitle>
            <DialogIcon />
            <DialogName>Åben stifinder i alternativ sag</DialogName>
            <WinControls>
               <WinGlyph d="M0 5.500h11" />
               <WinGlyph d="M.5.5h10v10H.5z" />
               <WinGlyph d="M.5.5l10 10M10.500.5l-10 10" />
            </WinControls>
         </DialogTitle>
         <DialogBody>
            <SearchGrid>
               <SearchLabel>Sagsnummer</SearchLabel>
               <SearchInput>20195012<Caretline /></SearchInput>
               <i />
               <WinButton $col={2}>OK</WinButton>
               <i />
               <WinButton>Cancel</WinButton>
            </SearchGrid>
            <InfoColumn>
               <span>Bygningsafsætning Miliegræsset 1</span>
               <span>H:\journal\461\2019\20195012</span>
            </InfoColumn>
            <SideButtons>
               <WinButton>Sagsnummer<br />søgning</WinButton>
               <WinButton>Flere søgekriterier</WinButton>
            </SideButtons>
         </DialogBody>
      </Dialog>

      <ArrowOverlay width="1396" height="517" viewBox="0 0 1396 517">
         <path d="M405 388L437 378L436 387L864 459Q869 461 868 465Q867 470 861 469L500 419L433 403L432 408Z" fill="#e94c47" />
      </ArrowOverlay>
      <Badge $x={1103} $y={147}>1</Badge>
      <Badge $x={1135} $y={70}>2</Badge>
      <Badge $x={768} $y={400}>3</Badge>
      <Badge $x={457} $y={362}>4</Badge>
   </Desktop>
)

export default App
